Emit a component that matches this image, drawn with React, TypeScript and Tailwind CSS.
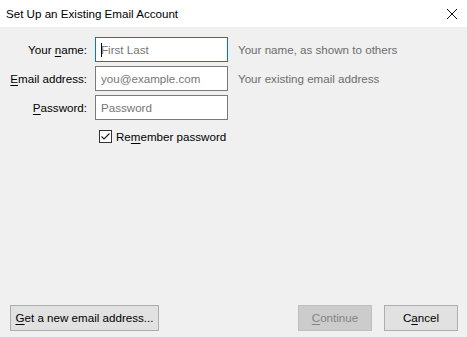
import React from 'react';

function U({ children }: { children: React.ReactNode }) {
  return <span className="underline underline-offset-2">{children}</span>;
}

function Field({ label, placeholder, hint, focused }: { label: React.ReactNode; placeholder: string; hint?: string; focused?: boolean }) {
  return (
    <>
      <div className="flex items-center justify-end text-[#000]">{label}</div>
      <div
        className={`relative flex items-center h-[25px] bg-white border pl-[5px] ${focused ? 'border-[#0078d7]' : 'border-[#7a7a7a]'}`}
      >
        {focused && <span className="absolute left-[5px] top-[5px] h-[14px] w-px bg-black" />}
        <span className="text-[#767676]">{placeholder}</span>
      </div>
      <div className="flex items-center text-[#6d6d6d]">{hint}</div>
    </>
  );
}

export default function App() {
  return (
    <div
      className="w-[467px] h-[337px] flex flex-col bg-[#f0f0f0] text-[11.6px] leading-none overflow-hidden"
      style={{ fontFamily: '"Liberation Sans", Arial, sans-serif' }}
    >
      <div className="h-[27px] shrink-0 bg-white flex items-center justify-between pl-[6px] pr-[5px]">
        <span className="text-black">Set Up an Existing Email Account</span>
        <svg width="20" height="20" viewBox="0 0 20 20" className="text-[#111]">
          <path d="M5 5 L15 15 M15 5 L5 15" stroke="currentColor" strokeWidth="1" fill="none" />
        </svg>
      </div>

      <div className="flex-1 flex flex-col pt-[10px] pb-[6px]">
        <div className="grid grid-cols-[87px_133px_1fr] gap-x-[8px] gap-y-[4px] [&>*:nth-child(3n)]:pl-[2px]">
          <Field label={<span>Your <U>n</U>ame:</span>} placeholder="First Last" hint="Your name, as shown to others" focused />
          <Field label={<span><U>E</U>mail address:</span>} placeholder="you@example.com" hint="Your existing email address" />
          <Field label={<span><U>P</U>assword:</span>} placeholder="Password" />
        </div>

        <div className="flex items-center mt-[10px] ml-[99px] gap-[4px]">
          <div className="w-[13px] h-[13px] border border-[#333] bg-white flex items-center justify-center">
            <svg width="11" height="11" viewBox="0 0 11 11">
              <path d="M1.5 5.5 L4 8 L9.5 2.5" stroke="#222" strokeWidth="1.2" fill="none" />
            </svg>
          </div>
          <span className="text-black">Re<U>m</U>ember password</span>
        </div>

        <div className="mt-auto flex items-center pl-[10px] pr-[9px]">
          <button className="h-[26px] w-[149px] bg-[#e1e1e1] border border-[#adadad] text-black">
            <U>G</U>et a new email address...
          </button>
          <div className="flex-1" />
          <button className="h-[26px] w-[74px] bg-[#cccccc] border border-[#bfbfbf] text-[#838383]" disabled>
            <U>C</U>ontinue
          </button>
          <button className="h-[26px] w-[74px] ml-[12px] bg-[#e1e1e1] border border-[#adadad] text-black">
            C<U>a</U>ncel
          </button>
        </div>
      </div>
    </div>
  );
}
